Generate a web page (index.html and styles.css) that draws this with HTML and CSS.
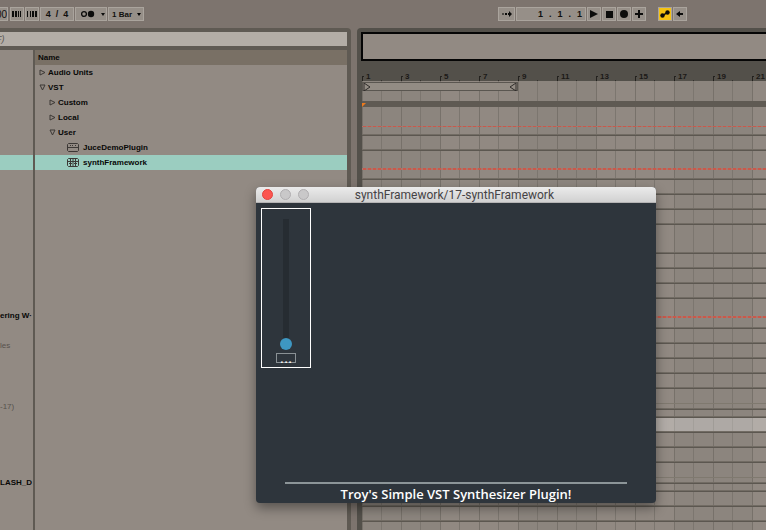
FILE: index.html
```html
<!DOCTYPE html>
<html lang="en">
<head>
<meta charset="utf-8">
<title>synthFramework</title>
<link rel="stylesheet" href="styles.css">
</head>
<body>
<header class="toolbar">
  <div class="group">
    <span class="cell tempo">00</span>
    <button class="cell" aria-label="Nudge down"><svg width="10" height="8"><path d="M0 1h2v6H0zM3 1h2v6H3zM6 1h1v6H6zM8 1h1v6H8z"/></svg></button>
    <button class="cell" aria-label="Nudge up"><svg width="10" height="8"><path d="M0 1h1v6H0zM3 1h1v6H3zM5 1h2v6H5zM8 1h2v6H8z"/></svg></button>
    <span class="cell signature"><span>4</span><span>/</span><span>4</span></span>
    <span class="split">
      <button class="cell metronome" aria-label="Metronome"><svg width="16" height="8"><circle cx="4" cy="4" r="2.4" fill="none" stroke="#0c0c0b" stroke-width="1.3"/><circle cx="11" cy="4" r="3.2"/></svg></button>
      <button class="cell drop" aria-label="Metronome options"><svg width="4" height="3"><path d="M0 0h4L2 3z"/></svg></button>
    </span>
    <span class="quantize">
      <select class="cell" aria-label="Quantization"><option>1 Bar</option></select>
      <svg class="caret" width="4" height="3"><path d="M0 0h4L2 3z"/></svg>
    </span>
  </div>
  <div class="group transport">
    <button class="cell follow" aria-label="Follow"><svg width="10" height="8"><path opacity=".55" d="M0 3h2v2H0z"/><path d="M3 3h2v2H3zM6 3h1V1l3 3-3 3V5H6z"/></svg></button>
    <span class="cell position"><span>1</span><span>.</span><span>1</span><span>.</span><span>1</span></span>
    <button class="cell" aria-label="Play"><svg width="8" height="8"><path d="M0 0l8 4-8 4z"/></svg></button>
    <button class="cell" aria-label="Stop"><svg width="8" height="8"><path d="M1 1h7v7H1z"/></svg></button>
    <button class="cell" aria-label="Record"><svg width="8" height="8"><circle cx="4" cy="4" r="4"/></svg></button>
    <button class="cell" aria-label="Overdub"><svg width="8" height="8"><path d="M3 0h2v3h3v2H5v3H3V5H0V3h3z"/></svg></button>
    <button class="cell active" aria-label="Automation arm"><svg width="10" height="8"><circle cx="2.5" cy="5.5" r="2.2"/><circle cx="7.5" cy="2.5" r="2.2"/><path d="M2 5l5-3 1 1-5 3z"/></svg></button>
    <button class="cell" aria-label="Re-enable automation"><svg width="8" height="8"><path d="M0 4l4-3v2h3v2H4v2z"/></svg></button>
  </div>
</header>

<main class="main">
  <section class="browser">
    <input class="search" type="text" value="F)" aria-label="Search">
    <div class="panes">
      <ul class="places">
        <li class="place-selected"></li>
        <li>ering W&middot;</li>
        <li class="dim">les</li>
        <li class="dim">-17)</li>
        <li>LASH_D</li>
      </ul>
      <div class="files">
        <div class="files-head">Name</div>
        <ul class="tree">
          <li><svg width="7" height="7"><path d="M1 1l5 2.500-5 2.500z"/></svg>Audio Units</li>
          <li><svg width="7" height="7"><path d="M1 1h5L3.500 6z"/></svg>VST</li>
          <li class="level-2"><svg width="7" height="7"><path d="M1 1l5 2.500-5 2.500z"/></svg>Custom</li>
          <li class="level-2"><svg width="7" height="7"><path d="M1 1l5 2.500-5 2.500z"/></svg>Local</li>
          <li class="level-2"><svg width="7" height="7"><path d="M1 1h5L3.500 6z"/></svg>User</li>
          <li class="level-3"><svg width="12" height="9"><path d="M1.500.5h9l1 1v6l-1 1h-9l-1-1v-6zM1 4.500h10M3 2.500h1M5 2.500h1M8 2.500h1"/></svg>JuceDemoPlugin</li>
          <li class="level-3 selected"><svg width="12" height="9"><path d="M1.500.5h9l1 1v6l-1 1h-9l-1-1v-6zM1 3.500h10M3.500 1v7M6 1v7M8.500 1v7M2 5.500h3M7 5.500h3"/></svg>synthFramework</li>
        </ul>
      </div>
    </div>
  </section>

  <section class="arrangement">
    <div class="overview"></div>
    <div class="ruler">
      <span>1</span><span>3</span><span>5</span><span>7</span><span>9</span><span>11</span><span>13</span><span>15</span><span>17</span><span>19</span><span>21</span>
    </div>
    <div class="lanes">
      <div class="loop-lane">
        <div class="loop">
          <svg width="8" height="8"><path d="M1 0l6 4-6 4z"/></svg>
          <svg width="8" height="8"><path d="M7 0L1 4l6 4z"/></svg>
        </div>
      </div>
      <div class="locators"><svg width="4" height="4"><path d="M0 0h4L0 4z"/></svg></div>
      <div class="track tall automated"></div>
      <div class="track"></div>
      <div class="track tall automated"></div>
      <div class="track"></div>
      <div class="track"></div>
      <div class="track"></div>
      <div class="track tall"></div>
      <div class="track"></div>
      <div class="track"></div>
      <div class="track"></div>
      <div class="track roomy automated"></div>
      <div class="track"></div>
      <div class="track"></div>
      <div class="track"></div>
      <div class="track"></div>
      <div class="track group-track"></div>
      <div class="track thin"></div>
      <div class="track highlighted"></div>
      <div class="track"></div>
      <div class="track"></div>
      <div class="track group-track"></div>
      <div class="track thin"></div>
      <div class="track"></div>
      <div class="track"></div>
      <div class="track"></div>
    </div>
  </section>
</main>

<section class="plugin" aria-label="Plugin window">
  <div class="titlebar">
    <button class="light close" aria-label="Close"></button>
    <button class="light" aria-label="Minimize"></button>
    <button class="light" aria-label="Zoom"></button>
    <h1>synthFramework/17-synthFramework</h1>
  </div>
  <div class="plugin-body">
    <div class="slider-box">
      <input class="slider" type="range" min="0" max="100" value="0" aria-label="Level">
      <output class="value">...</output>
    </div>
    <footer class="plugin-foot">Troy's Simple VST Synthesizer Plugin!</footer>
  </div>
</section>
</body>
</html>
```

FILE: styles.css
```css
* {
  box-sizing: border-box;
}

body {
  margin: 0;
  height: 100vh;
  overflow: hidden;
  display: flex;
  flex-direction: column;
  background: #7d746e;
  color: #080807;
  font: bold 8px "Liberation Sans", Arial, sans-serif;
}

ul {
  margin: 0;
  padding: 0;
  list-style: none;
}

svg {
  display: block;
  flex: none;
}

/* Toolbar */
.toolbar {
  flex: none;
  height: 28px;
  display: flex;
  align-items: center;
}

.group {
  display: flex;
  gap: 1px;
}

.transport {
  margin-left: auto;
  margin-right: 79px;
}

.cell {
  width: 14px;
  height: 14px;
  padding: 0;
  display: flex;
  align-items: center;
  justify-content: center;
  border: 1px solid #aaa49d;
  border-radius: 0;
  background: #968f88;
  color: #11100f;
  font: inherit;
  fill: #0c0c0b;
}

.tempo {
  width: 8px;
  margin-right: 1px;
  justify-content: flex-end;
  overflow: hidden;
  border-left: 0;
  font-weight: normal;
  font-size: 10px;
}

.signature {
  width: 34px;
  gap: 5px;
  font-size: 9px;
}

.split {
  display: flex;
}

.metronome {
  width: 24px;
  border-right: 0;
}

.drop {
  width: 8px;
  border-left: 0;
}

.quantize {
  position: relative;
}

.quantize select {
  width: 36px;
  padding-left: 3px;
  appearance: none;
}

.caret {
  position: absolute;
  right: 3px;
  top: 6px;
}

.follow {
  width: 17px;
}

.position {
  width: 70px;
  padding-right: 3px;
  gap: 6px;
  justify-content: flex-end;
  font-size: 9px;
}

.active {
  margin-left: 11px;
  background: #f5c211;
}

/* Main area */
.main {
  flex: 1;
  min-height: 0;
  display: flex;
  gap: 6px;
}

.browser {
  flex: 0 0 351px;
  display: flex;
  flex-direction: column;
  gap: 4px;
  padding: 4px 4px 0 0;
  border-radius: 0 4px 0 0;
  background: #5f5a53;
}

.search {
  width: 100%;
  height: 14px;
  padding: 0;
  border: 0;
  background: #b3ada6;
  color: #5c5751;
  font: italic 9px "Liberation Sans", Arial, sans-serif;
  text-indent: -4px;
}

.panes {
  flex: 1;
  display: flex;
  gap: 2px;
}

.places,
.files {
  background: #928a83;
}

.places {
  width: 33px;
  line-height: 15px;
}

.places li {
  white-space: nowrap;
}

.places .place-selected {
  height: 15px;
  margin: 105px 0 138px;
  background: #9bcdc0;
}

.places .dim {
  margin: 15px 0 46px;
  color: #57524d;
  font-weight: normal;
}

.places .dim + .dim {
  margin: 0 0 61px;
}

.files {
  flex: 1;
  line-height: 15px;
}

.files-head {
  height: 15px;
  padding-left: 3px;
  background: #797065;
}

.tree li {
  height: 15px;
  padding-left: 4px;
  display: flex;
  align-items: center;
  gap: 2px;
}

.tree svg {
  fill: none;
  stroke: #3c3835;
}

.tree .level-2 {
  padding-left: 14px;
}

.tree .level-3 {
  padding-left: 32px;
  gap: 4px;
}

.tree .selected {
  background: #9bcdc0;
}

/* Arrangement */
.arrangement {
  flex: 1;
  min-width: 0;
  display: flex;
  flex-direction: column;
  padding: 4px 0 0 4px;
  border-radius: 4px 0 0 0;
  background: #53504a;
}

.overview {
  flex: none;
  height: 29px;
  border: 2px solid #050505;
  border-right: 0;
  background: #928a83;
}

.ruler {
  flex: none;
  height: 20px;
  margin-left: 1px;
  padding-top: 10px;
  display: flex;
  overflow: hidden;
  color: #1b1917;
}

.ruler span {
  flex: 0 0 39px;
  height: 10px;
  padding-left: 4px;
  line-height: 11px;
  background:
    linear-gradient(#24221f, #24221f) 0 5px / 1px 5px no-repeat,
    linear-gradient(#24221f, #24221f) 0 5px / 2px 1px no-repeat,
    linear-gradient(#34312e, #34312e) 19px 9px / 1px 1px no-repeat;
}

.lanes {
  flex: 1;
  min-height: 0;
  margin-left: 1px;
  overflow: hidden;
  background:
    repeating-linear-gradient(90deg, #77716a 0 1px, transparent 1px 19px, #7c766f 19px 20px, transparent 20px 39px),
    repeating-linear-gradient(90deg, #8c857e 0 78px, #918982 78px 156px);
}

.loop-lane {
  height: 20px;
  padding-top: 1px;
}

.loop {
  width: 156px;
  height: 9px;
  display: flex;
  justify-content: space-between;
  border: 1px solid #5a5650;
  background: #938c84;
}

.loop svg {
  fill: none;
  stroke: #2e2b29;
  height: 8px;
}

.locators {
  height: 6px;
  padding-top: 2px;
  background: #5f5a53;
}

.locators svg {
  fill: #ee7a1c;
}

.track {
  height: 15px;
  border-bottom: 1px solid #5c5750;
  box-shadow: inset 0 -1px #726c64;
}

.tall {
  height: 29px;
}

.roomy {
  height: 30px;
}

.automated {
  background: repeating-linear-gradient(90deg, #a8776c 0 1px, #c9594b 1px 4px, #a8776c 4px 5px) 0 19px / 100% 1px no-repeat;
}

.automated + .track ~ .automated {
  background-position: 0 17px;
  background-size: 100% 2px;
}

.group-track {
  height: 21px;
  background: linear-gradient(transparent 14px, #7f796f 14px 15px, transparent 15px);
}

.thin {
  height: 8px;
}

.highlighted {
  background: rgba(255, 255, 255, 0.3);
}

/* Floating plugin window */
.plugin {
  position: absolute;
  left: 256px;
  top: 187px;
  width: 400px;
  height: 316px;
  display: flex;
  flex-direction: column;
  overflow: hidden;
  border-radius: 4px;
  background: #2e353c;
  box-shadow: 0 5px 12px rgba(0, 0, 0, 0.4);
}

.titlebar {
  flex: none;
  height: 16px;
  padding: 0 102px 0 6px;
  display: flex;
  align-items: center;
  gap: 7px;
  border-bottom: 1px solid #b5b4b5;
  background: linear-gradient(#ebebeb, #d1d1d1);
}

.light {
  width: 11px;
  height: 11px;
  padding: 0;
  border: 1px solid #b0aeb0;
  border-radius: 50%;
  background: #c9c8c9;
}

.close {
  border-color: #e0443e;
  background: #fc5550;
}

.titlebar h1 {
  margin: 0 0 0 auto;
  color: #454345;
  font: 12px/16px Roboto, sans-serif;
  white-space: nowrap;
}

.plugin-body {
  flex: 1;
  padding: 5px;
  display: flex;
  flex-direction: column;
  justify-content: space-between;
}

.slider-box {
  width: 50px;
  height: 160px;
  padding: 10px 0 4px;
  display: flex;
  flex-direction: column;
  align-items: center;
  gap: 3px;
  border: 1px solid #fff;
}

.slider {
  flex: 1;
  min-height: 0;
  width: 12px;
  margin: 0;
  appearance: none;
  writing-mode: vertical-lr;
  direction: rtl;
  background: linear-gradient(#262c32, #262c32) center / 6px 100% no-repeat;
  border-radius: 3px;
}

.slider::-webkit-slider-thumb {
  appearance: none;
  width: 12px;
  height: 12px;
  border-radius: 50%;
  background: #3e97c2;
}

.value {
  width: 20px;
  height: 10px;
  border: 1px solid #8a9195;
  color: #fff;
  font: 15px/8px "Liberation Sans", sans-serif;
  text-align: center;
}

.plugin-foot {
  margin: 0 24px -5px;
  padding-top: 2px;
  border-top: 2px solid #8c9598;
  color: #fff;
  font: 600 13px/17px "Open Sans", sans-serif;
  text-align: center;
}
```
